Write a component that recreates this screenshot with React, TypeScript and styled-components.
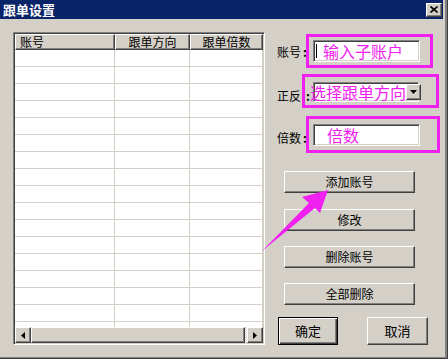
import React from "react";
import styled, { createGlobalStyle, css } from "styled-components";

const FACE = "#d4d0c8";
const SHADOW = "#808080";
const DARK = "#404040";
const MAGENTA = "#f020f0";
const NAVY = "#0a246a";

const Global = createGlobalStyle`
  html, body { margin: 0; padding: 0; background: #fff; }
  body { font-family: "Noto Sans CJK SC", "Liberation Sans", sans-serif; }
  * { box-sizing: border-box; }
`;

const raised = css`
  border: 1px solid;
  border-color: #fff ${DARK} ${DARK} #fff;
  box-shadow: inset -1px -1px ${SHADOW};
  background: ${FACE};
`;

const sunken = css`
  border: 1px solid;
  border-color: ${SHADOW} #fff #fff ${SHADOW};
  box-shadow: inset 1px 1px ${DARK}, inset -1px -1px ${FACE};
  padding: 1px;
`;

const Screen = styled.div`
  position: relative;
  width: 448px;
  height: 360px;
  overflow: hidden;
  background: #fff;
`;

const Window = styled.div`
  width: 448px;
  height: 359px;
  padding-right: 3px;
  padding-bottom: 2px;
  background: ${FACE};
  box-shadow: inset -1px -1px ${DARK}, inset -3px -2px ${SHADOW};
  display: flex;
  flex-direction: column;
`;

const TitleBar = styled.div`
  height: 19px;
  margin-right: 2px;
  background: ${NAVY};
  display: flex;
  align-items: center;
  justify-content: space-between;
  padding-left: 3px;
`;

const TitleText = styled.span`
  color: #fff;
  font-weight: 700;
  font-size: 13px;
  line-height: 19px;
`;

const CloseButton = styled.div`
  ${raised};
  width: 16px;
  height: 14px;
  margin-right: 1px;
  display: flex;
  align-items: center;
  justify-content: center;
`;

const Body = styled.div`
  flex: 1;
  display: flex;
  align-items: flex-start;
  padding: 13px 0 0 13px;
`;

const ListView = styled.div`
  ${sunken};
  width: 252px;
  height: 313px;
  background: #fff;
  display: flex;
  flex-direction: column;
  overflow: hidden;
`;

const HeaderRow = styled.div`
  display: grid;
  grid-template-columns: 100px 75px 73px;
  height: 16px;
  flex: none;
`;

const HeaderCell = styled.div<{ $align?: string }>`
  ${raised};
  font-size: 12px;
  line-height: 14px;
  color: #000;
  text-align: ${(p) => p.$align || "center"};
  padding-left: ${(p) => (p.$align === "left" ? "4px" : "0")};
  white-space: nowrap;
  overflow: hidden;
`;

const Rows = styled.div`
  flex: 1;
  overflow: hidden;
`;

const Row = styled.div`
  display: grid;
  grid-template-columns: 100px 75px 73px;
  height: 17px;
`;

const Cell = styled.div`
  border-right: 1px solid ${FACE};
  border-bottom: 1px solid ${FACE};
`;

const HScroll = styled.div`
  display: flex;
  height: 16px;
  flex: none;
`;

const ScrollButton = styled.div`
  ${raised};
  width: 16px;
  height: 16px;
  display: flex;
  align-items: center;
  justify-content: center;
`;

const Track = styled.div`
  flex: 1;
  display: flex;
  background: repeating-conic-gradient(#fff 0 25%, ${FACE} 0 50%) 0 0 / 2px 2px;
`;

const Thumb = styled.div`
  ${raised};
  flex: 1;
  margin-right: 2px;
`;

const Side = styled.div`
  margin-left: 12px;
  padding-top: 2px;
  display: flex;
  flex-direction: column;
`;

const FieldRow = styled.div<{ $top: number }>`
  display: flex;
  align-items: flex-start;
  margin-top: ${(p) => p.$top}px;
`;

const Label = styled.span<{ $width: number; $offset: number }>`
  width: ${(p) => p.$width}px;
  margin-top: ${(p) => p.$offset}px;
  font-size: 12px;
  line-height: 16px;
  color: #000;
  white-space: nowrap;
  flex: none;
`;

const Colon = styled.span<{ $gap: number }>`
  margin-left: ${(p) => p.$gap}px;
  font-weight: 700;
`;

const MarkBox = styled.div<{ $pad: string }>`
  border: 3px solid ${MAGENTA};
  padding: ${(p) => p.$pad};
  display: flex;
`;

const TextField = styled.div`
  ${sunken};
  width: 107px;
  height: 22px;
  background: #fff;
  display: flex;
  align-items: center;
`;

const Caret = styled.span`
  width: 1px;
  height: 14px;
  background: #000;
  margin-left: 1px;
  flex: none;
`;

const Hint = styled.span<{ $left: number }>`
  color: ${MAGENTA};
  font-size: 16px;
  line-height: 18px;
  white-space: nowrap;
  margin-left: ${(p) => p.$left}px;
`;

const Combo = styled.div`
  ${sunken};
  width: 106px;
  height: 20px;
  background: #fff;
  display: flex;
  align-items: center;
`;

const DropButton = styled.div`
  ${raised};
  width: 15px;
  height: 16px;
  margin-left: auto;
  flex: none;
  display: flex;
  align-items: center;
  justify-content: center;
`;

const ActionButton = styled.div<{ $top: number }>`
  ${raised};
  width: 131px;
  height: 22px;
  margin-left: 7px;
  margin-top: ${(p) => p.$top}px;
  font-size: 12px;
  line-height: 19px;
  text-align: center;
  color: #000;
`;

const DialogButtons = styled.div`
  display: flex;
  gap: 29px;
  margin-top: 12px;
  margin-left: 1px;
`;

const DialogButton = styled.div<{ $default?: boolean; $width: number }>`
  width: ${(p) => p.$width}px;
  height: 28px;
  background: ${FACE};
  font-size: 13px;
  line-height: 25px;
  text-align: center;
  color: #000;
  ${(p) =>
    p.$default
      ? css`
          border: 1px solid #000;
          box-shadow: inset 1px 1px #fff, inset -1px -1px ${DARK}, inset -2px -2px ${SHADOW};
        `
      : css`
          border: 1px solid;
          border-color: #fff ${DARK} ${DARK} #fff;
          box-shadow: inset -1px -1px ${SHADOW};
        `}
`;

const Overlay = styled.svg`
  position: absolute;
  left: 0;
  top: 0;
  pointer-events: none;
`;

const Tri = ({ dir }: { dir: "left" | "right" | "down" }) => {
  if (dir === "down")
    return (
      <svg width="7" height="4" viewBox="0 0 7 4">
        <polygon points="0,0 7,0 3.5,4" fill="#000" />
      </svg>
    );
  return (
    <svg width="4" height="7" viewBox="0 0 4 7">
      <polygon points={dir === "left" ? "4,0 4,7 0,3.5" : "0,0 0,7 4,3.5"} fill="#000" />
    </svg>
  );
};

const ROWS = Array.from({ length: 17 });

export default function App() {
  return (
    <Screen>
      <Global />
      <Window>
        <TitleBar>
          <TitleText>跟单设置</TitleText>
          <CloseButton>
            <svg width="8" height="7" viewBox="0 0 8 7">
              <path d="M0.5 0.5 L7.5 6.5 M7.5 0.5 L0.5 6.5" stroke="#000" strokeWidth="1.6" />
            </svg>
          </CloseButton>
        </TitleBar>
        <Body>
          <ListView>
            <HeaderRow>
              <HeaderCell $align="left">账号</HeaderCell>
              <HeaderCell>跟单方向</HeaderCell>
              <HeaderCell>跟单倍数</HeaderCell>
            </HeaderRow>
            <Rows>
              {ROWS.map((_, i) => (
                <Row key={i}>
                  <Cell />
                  <Cell />
                  <Cell />
                </Row>
              ))}
            </Rows>
            <HScroll>
              <ScrollButton>
                <Tri dir="left" />
              </ScrollButton>
              <Track>
                <Thumb />
              </Track>
              <ScrollButton>
                <Tri dir="right" />
              </ScrollButton>
            </HScroll>
          </ListView>
          <Side>
            <FieldRow $top={0}>
              <Label $width={29} $offset={10}>
                账号<Colon $gap={2}>:</Colon>
              </Label>
              <MarkBox $pad="3px 10px 3px 4px">
                <TextField>
                  <Caret />
                  <Hint $left={6}>输入子账户</Hint>
                </TextField>
              </MarkBox>
            </FieldRow>
            <FieldRow $top={6}>
              <Label $width={25} $offset={14}>
                正反<Colon $gap={5}>:</Colon>
              </Label>
              <MarkBox $pad="5px 17px 3px 8px">
                <Combo>
                  <Hint $left={-5}>选择跟单方向</Hint>
                  <DropButton>
                    <Tri dir="down" />
                  </DropButton>
                </Combo>
              </MarkBox>
            </FieldRow>
            <FieldRow $top={8}>
              <Label $width={29} $offset={14}>
                倍数<Colon $gap={2}>:</Colon>
              </Label>
              <MarkBox $pad="5px 17px 4px 4px">
                <TextField>
                  <Hint $left={12}>倍数</Hint>
                </TextField>
              </MarkBox>
            </FieldRow>
            <ActionButton $top={18}>添加账号</ActionButton>
            <ActionButton $top={16}>修改</ActionButton>
            <ActionButton $top={15}>删除账号</ActionButton>
            <ActionButton $top={15}>全部删除</ActionButton>
            <DialogButtons>
              <DialogButton $default $width={60}>确定</DialogButton>
              <DialogButton $width={61}>取消</DialogButton>
            </DialogButtons>
          </Side>
        </Body>
      </Window>
      <Overlay width="448" height="360" viewBox="0 0 448 360">
        <polygon points="262,251 309,203 302,197 328,190 320,213 315,208" fill={MAGENTA} />
      </Overlay>
    </Screen>
  );
}
